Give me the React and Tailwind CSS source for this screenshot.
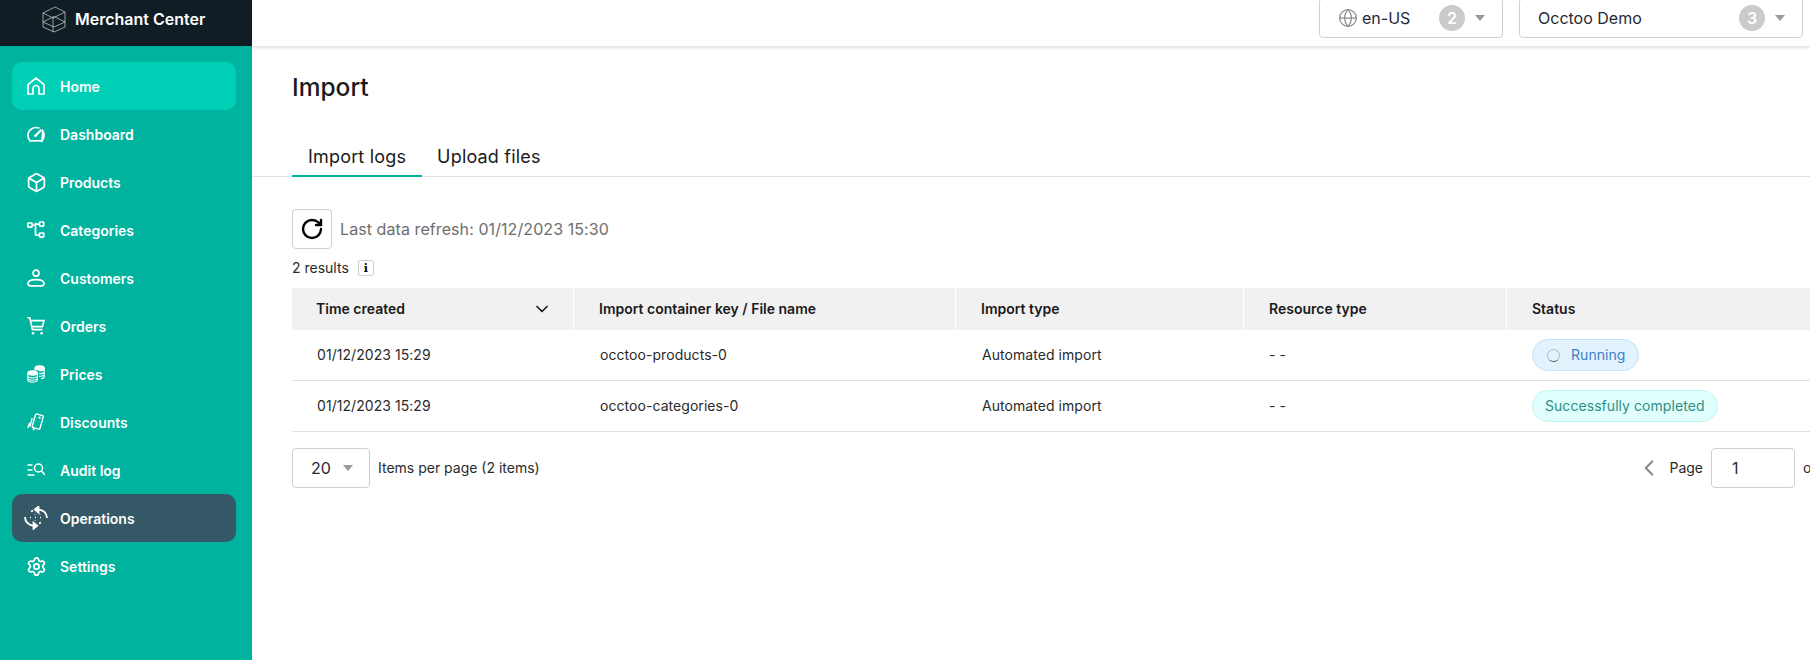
import { Box, Settings, Globe, ChevronDown, ChevronLeft, RotateCw } from "lucide-react";

const HomeIcon = (props) => (
  <svg viewBox="0 0 18 18" fill="none" stroke="currentColor" strokeWidth="1.7" {...props}>
    <path d="M1 7.6L9 1L17 7.6V17H12V11.5A3 3 0 0 0 6 11.5V17H1Z" />
  </svg>
);

const Dashboard = (props) => (
  <svg viewBox="0 0 18 18" fill="none" stroke="currentColor" strokeWidth="1.7" {...props}>
    <path d="M3 15.5C1.6 14 0.9 12.2 0.9 10.4C0.9 6 4.5 2.5 9 2.5C10.2 2.5 11.4 2.7 12.4 3.2" />
    <path d="M15.8 6C16.6 7.2 17.1 8.8 17.1 10.4C17.1 12.2 16.4 14 15 15.5Z" />
    <path d="M2 15.8H16" />
    <path d="M7.6 11.6L14.4 4.8" strokeWidth="2.2" />
  </svg>
);

const Categories = (props) => (
  <svg viewBox="0 0 18 18" fill="none" stroke="currentColor" strokeWidth="1.7" {...props}>
    <rect x="0.9" y="2" width="4.2" height="4.2" rx="0.6" />
    <rect x="12.5" y="1" width="4.2" height="4.2" rx="0.6" />
    <rect x="12.5" y="12" width="4.2" height="4.2" rx="0.6" />
    <path d="M5.1 4H8.5M8.5 1.8V14H12.5M8.5 3.2H12.5" />
  </svg>
);

const Customer = (props) => (
  <svg viewBox="0 0 18 18" fill="none" stroke="currentColor" strokeWidth="1.7" {...props}>
    <circle cx="9" cy="4.2" r="3" />
    <path d="M1 14.6C1 12 4.5 10.6 9 10.6S17 12 17 14.6C17 16 16.2 16.8 15 16.8H3C1.8 16.8 1 16 1 14.6Z" />
  </svg>
);

const Cart = (props) => (
  <svg viewBox="0 0 18 18" fill="none" stroke="currentColor" strokeWidth="1.6" {...props}>
    <path d="M0.3 0.8H2.8L5.4 12.6H15.6" />
    <path d="M3.5 3.6H17L15.4 9.6H4.8" />
    <circle cx="6" cy="16.3" r="1.3" fill="currentColor" stroke="none" />
    <circle cx="14.6" cy="16.3" r="1.3" fill="currentColor" stroke="none" />
  </svg>
);

const Coins = (props) => (
  <svg viewBox="0 0 18 18" fill="none" stroke="currentColor" strokeWidth="1.1" {...props}>
    <ellipse cx="12.6" cy="3" rx="4.6" ry="2.1" fill="currentColor" />
    <path d="M8 3V6M17.2 3V12C17.2 13 16 13.6 14 13.8M12 8.8C14.5 8.8 16.6 8.3 17.2 7M12 5.8C14.5 6 16.6 5.3 17.2 4.4M12 11.4C14.5 11.4 16.6 11 17.2 9.8" />
    <ellipse cx="5.6" cy="8" rx="4.8" ry="2.2" fill="currentColor" />
    <path d="M0.8 8V15C0.8 16.2 2.8 17.2 5.6 17.2S10.4 16.2 10.4 15V8M0.8 10.8C0.8 12 2.8 13 5.6 13S10.4 12 10.4 10.8M0.8 13C0.8 14.2 2.8 15.2 5.6 15.2S10.4 14.2 10.4 13" />
  </svg>
);

const Discount = (props) => (
  <svg viewBox="0 0 18 18" fill="none" stroke="currentColor" strokeWidth="1.4" {...props}>
    <rect x="6.6" y="1.4" width="8" height="14" rx="1" transform="rotate(16 10 9)" />
    <circle cx="12.6" cy="4.6" r="0.5" fill="currentColor" />
    <path d="M5.2 5L2.9 13.6M2.6 10L0.8 15M5.8 15.6L7.6 17" />
  </svg>
);

const AuditLog = (props) => (
  <svg viewBox="0 0 18 18" fill="none" stroke="currentColor" strokeWidth="1.5" {...props}>
    <path d="M0.5 4H5.5M0.5 9H5.5M0.5 14H7.5" />
    <circle cx="11.5" cy="7" r="4" />
    <path d="M14.5 10L18 14" />
  </svg>
);

const Operations = (props) => (
  <svg viewBox="0 0 24 24" fill="none" stroke="currentColor" strokeWidth="1.8" {...props}>
    <path d="M23 12C23 7.5 19.5 3.8 14.5 3.6" />
    <path d="M14.5 0.6L10.8 3.6L14.5 6.6Z" fill="currentColor" />
    <path d="M1 11C1 15.5 4.5 19.5 9.5 19.7" />
    <path d="M9.5 16.7L13.2 19.7L9.5 22.7Z" fill="currentColor" />
    <path d="M7 5.5L9 4.6" />
    <path d="M15 17.5L17 16.5" />
    <path d="M6 11.5H7M11 11.5H12M16 11.5H17M11 8V8.6M16 8V8.6M11 14.5V15.1" strokeWidth="1.4" />
  </svg>
);

const Logo = () => (
  <svg viewBox="0 0 24 27" className="w-[24px] h-[27px] text-[#d4d7d9]" fill="none" stroke="currentColor" strokeWidth="0.7">
    <path d="M1 7L13 1L23 6V21L12 26L1 21Z" />
    <path d="M1 7L11 12L23 6M11 12V26" />
    <path d="M1 16L12 10.5L23 16L12 21Z" />
  </svg>
);

const navItems = [
  { label: "Home", Icon: HomeIcon, iconSize: "w-[18px] h-[18px]", active: "bg-[#00cfb6]" },
  { label: "Dashboard", Icon: Dashboard, iconSize: "w-[18px] h-[18px]" },
  { label: "Products", Icon: Box, iconSize: "w-[21px] h-[21px]" },
  { label: "Categories", Icon: Categories, iconSize: "w-[18px] h-[18px]" },
  { label: "Customers", Icon: Customer, iconSize: "w-[18px] h-[18px]" },
  { label: "Orders", Icon: Cart, iconSize: "w-[18px] h-[18px]" },
  { label: "Prices", Icon: Coins, iconSize: "w-[18px] h-[18px]" },
  { label: "Discounts", Icon: Discount, iconSize: "w-[18px] h-[18px]" },
  { label: "Audit log", Icon: AuditLog, iconSize: "w-[18px] h-[18px]" },
  { label: "Operations", Icon: Operations, iconSize: "w-6 h-6", active: "bg-[#345865]" },
  { label: "Settings", Icon: Settings, iconSize: "w-[21px] h-[21px]" },
];

const columns = [
  { label: "Time created", width: "w-[282px]", pad: "pl-6" },
  { label: "Import container key / File name", width: "w-[382px]", pad: "pl-[25px]" },
  { label: "Import type", width: "w-[288px]", pad: "pl-[25px]" },
  { label: "Resource type", width: "w-[263px]", pad: "pl-[25px]" },
  { label: "Status", width: "flex-1", pad: "pl-[25px]" },
];

const Caret = () => (
  <span className="w-0 h-0 border-x-[5px] border-x-transparent border-t-[6px] border-t-[#9a9a9a]" />
);

const Sidebar = () => (
  <aside className="w-[252px] shrink-0 bg-[#00b39e] flex flex-col">
    <div className="h-[46px] bg-[#111d25] flex items-center pl-[42px] pb-[8px] gap-[9px]">
      <Logo />
      <span className="text-white text-base font-semibold">Merchant Center</span>
    </div>
    <nav className="flex flex-col pl-3 pr-4 pt-4">
      {navItems.map(({ label, Icon, iconSize, active }) => (
        <a
          key={label}
          className={`h-12 flex items-center rounded-[10px] text-white text-sm font-semibold ${active || ""}`}
        >
          <span className="w-12 flex justify-center">
            <Icon className={iconSize} />
          </span>
          <span className="pt-px">{label}</span>
        </a>
      ))}
    </nav>
  </aside>
);

const Topbar = () => (
  <header className="h-[46px] shrink-0 flex justify-end items-end gap-4 pr-[7px] pb-[8px] shadow-[0_1px_4px_rgba(0,0,0,0.18)]">
    <div className="w-[184px] h-[40px] shrink-0 border border-[#cfcfcf] rounded-[4px] flex items-center pl-[18px] pr-[17px] text-[#1f2a36] text-base">
      <Globe className="w-5 h-5 text-[#8a8a8a] mr-[4px]" strokeWidth={1.5} />
      en-US
      <span className="ml-auto w-[26px] h-[26px] rounded-full bg-[#cbcbcb] text-white font-semibold flex items-center justify-center mr-[10px]">2</span>
      <Caret />
    </div>
    <div className="w-[284px] h-[40px] shrink-0 border border-[#cfcfcf] rounded-[4px] flex items-center pl-[18px] pr-[17px] text-[#1f2a36] text-base">
      Occtoo Demo
      <span className="ml-auto w-[26px] h-[26px] rounded-full bg-[#cbcbcb] text-white font-semibold flex items-center justify-center mr-[10px]">3</span>
      <Caret />
    </div>
  </header>
);

const Tabs = () => (
  <div className="h-[41px] mt-[32px] border-b border-[#e2e2e2] pl-10 flex text-[#1a1a1a] text-lg tracking-[0.01em]">
    <div className="h-[41px] px-4 pt-[2px] flex items-center border-b-2 border-[#00b39e]">Import logs</div>
    <div className="h-[41px] px-[15px] flex items-center">Upload files</div>
  </div>
);

const Row = ({ time, fileName, status }) => (
  <div className="h-[51px] flex items-center border-b border-[#e2e2e2] text-sm tracking-[0.004em] text-[#2a2a2a]">
    <div className="w-[282px] pl-[25px]">{time}</div>
    <div className="w-[382px] pl-[26px]">{fileName}</div>
    <div className="w-[288px] pl-[26px]">Automated import</div>
    <div className="w-[263px] pl-[25px]">- -</div>
    <div className="flex-1 pl-[25px]">{status}</div>
  </div>
);

const Table = () => (
  <div>
    <div className="h-[42px] flex bg-[#f1f1f1] text-sm font-semibold text-[#1a1a1a]">
      {columns.map((col, i) => (
        <div
          key={col.label}
          className={`${col.width} ${col.pad} flex items-center ${i < columns.length - 1 ? "border-r border-white" : ""}`}
        >
          {col.label}
          {i === 0 && <ChevronDown className="w-5 h-5 ml-auto mr-[21px]" />}
        </div>
      ))}
    </div>
    <Row
      time="01/12/2023 15:29"
      fileName="occtoo-products-0"
      status={
        <span className="inline-flex items-center h-8 pl-[14px] pr-[13px] rounded-full bg-[#e3f3fe] border border-[#bde2fb] text-[#3d7fc6]">
          <span className="w-[13px] h-[13px] rounded-full border-[1.5px] border-[#b5bcc2] border-b-[#555] mr-[11px]" />
          Running
        </span>
      }
    />
    <Row
      time="01/12/2023 15:29"
      fileName="occtoo-categories-0"
      status={
        <span className="inline-flex items-center h-8 px-3 rounded-full bg-[#e0fefb] border border-[#bcf8f3] text-[#2f8f87]">
          Successfully completed
        </span>
      }
    />
  </div>
);

const Pagination = () => (
  <div className="mt-[16px] h-10 flex items-center text-sm text-[#2a2a2a]">
    <div className="w-[78px] h-10 border border-[#cfcfcf] rounded-[4px] flex items-center pl-[18px] text-[#1f2a36] text-base">
      <span className="mr-3">20</span>
      <Caret />
    </div>
    <span className="ml-2">Items per page (2 items)</span>
    <ChevronLeft className="ml-auto w-[26px] h-[26px] text-[#8a8a8a] mr-[7px]" />
    <span>Page</span>
    <div className="w-[84px] h-10 border border-[#cfcfcf] rounded-[4px] flex items-center pl-5 ml-2 text-base">1</div>
    <span className="ml-2 w-[7px] shrink-0 whitespace-nowrap">of 1</span>
  </div>
);

export default function App() {
  return (
    <div className="w-[1810px] h-[660px] flex overflow-hidden bg-white font-['Inter',sans-serif]">
      <Sidebar />
      <main className="flex-1 min-w-0 flex flex-col">
        <Topbar />
        <h1 className="pl-10 mt-[24px] h-[34px] leading-[34px] text-[24.5px] font-medium text-[#1a1a1a]">Import</h1>
        <Tabs />
        <div className="pl-10 pt-[32px]">
          <div className="flex items-center gap-2 h-10">
            <button className="w-10 h-10 border border-[#cfcfcf] rounded-[4px] flex items-center justify-center">
              <RotateCw className="w-6 h-6 text-black" strokeWidth={2.4} />
            </button>
            <span className="text-base tracking-[0.005em] text-[#6e6e6e]">Last data refresh: 01/12/2023 15:30</span>
          </div>
          <div className="mt-[10px] mb-[11px] h-[18px] flex items-center text-sm text-[#2a2a2a]">
            2 results
            <span className="ml-[9px] w-4 h-4 border border-[#d0d0d0] rounded-[2px] flex items-center justify-center text-[11px] leading-none font-bold text-black font-['DejaVu_Serif',serif]">
              i
            </span>
          </div>
          <Table />
          <Pagination />
        </div>
      </main>
    </div>
  );
}
